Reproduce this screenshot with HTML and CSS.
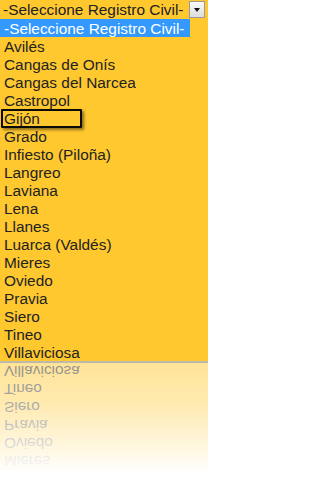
FILE: index.html
```html
<!DOCTYPE html>
<html lang="es">
<head>
<meta charset="utf-8">
<title>Registro Civil</title>
<link rel="stylesheet" href="styles.css">
</head>
<body>
<div class="picker">
  <div class="select">
    <span class="select-value">-Seleccione Registro Civil-</span>
    <span class="select-btn"><span class="arrow"></span></span>
  </div>
  <ul class="options">
    <li class="selected">-Seleccione Registro Civil-</li>
    <li>Avilés</li>
    <li>Cangas de Onís</li>
    <li>Cangas del Narcea</li>
    <li>Castropol</li>
    <li class="focused"><span class="ring"></span>Gijón</li>
    <li>Grado</li>
    <li>Infiesto (Piloña)</li>
    <li>Langreo</li>
    <li>Laviana</li>
    <li>Lena</li>
    <li>Llanes</li>
    <li>Luarca (Valdés)</li>
    <li>Mieres</li>
    <li>Oviedo</li>
    <li>Pravia</li>
    <li>Siero</li>
    <li>Tineo</li>
    <li>Villaviciosa</li>
  </ul>
  <div class="reflection" aria-hidden="true">
    <ul class="mirror">
      <li>Villaviciosa</li>
      <li>Tineo</li>
      <li>Siero</li>
      <li>Pravia</li>
      <li>Oviedo</li>
      <li>Mieres</li>
    </ul>
  </div>
</div>
</body>
</html>
```
FILE: styles.css
```css
html, body {
  margin: 0;
  padding: 0;
  background: #ffffff;
}
body {
  width: 208px;
  font-family: "Liberation Sans", Arial, sans-serif;
  font-size: 15.4px;
  color: #222222;
}
.picker {
  display: flex;
  flex-direction: column;
  width: 208px;
}
.select {
  display: flex;
  align-items: stretch;
  height: 19px;
  background: #ffc82f;
}
.select-value {
  flex: 1;
  padding-left: 3px;
  line-height: 20px;
  white-space: nowrap;
}
.select-btn {
  width: 16px;
  height: 17px;
  margin: 1px 3px 1px 0;
  box-sizing: border-box;
  border: 1px solid #9a9a9a;
  background: linear-gradient(#fafafa, #dcdcdc);
  display: flex;
  align-items: center;
  justify-content: center;
}
.arrow {
  width: 0;
  height: 0;
  border-left: 3.5px solid transparent;
  border-right: 3.5px solid transparent;
  border-top: 4px solid #111;
  margin-top: 1px;
}
.options, .mirror {
  list-style: none;
  margin: 0;
  padding: 0;
  background: #ffc82f;
}
.options li, .mirror li {
  height: 18px;
  line-height: 20px;
  padding-left: 4px;
  white-space: nowrap;
}
.options li.selected {
  width: 186px;
  background: #3399ff;
  color: #ffffff;
}
.options li.focused {
  position: relative;
}
.ring {
  position: absolute;
  left: 1px;
  top: 0;
  width: 81px;
  height: 19px;
  box-sizing: border-box;
  border: 2px solid #0a0a0a;
  border-radius: 1px;
  box-shadow: 2px 2px 3px rgba(0, 0, 0, 0.45);
}
.options {
  border-bottom: 2px solid #bdb9ad;
}
.reflection {
  position: relative;
  height: 122px;
  overflow: hidden;
}
.mirror li {
  transform: scaleY(-1);
  color: #1a1a1a;
}
.reflection::after {
  content: "";
  position: absolute;
  inset: 0;
  background: linear-gradient(
    to bottom,
    rgba(255, 255, 255, 0.5) 0px,
    rgba(255, 255, 255, 0.62) 40px,
    rgba(255, 255, 255, 0.8) 75px,
    rgba(255, 255, 255, 0.94) 100px,
    rgba(255, 255, 255, 1) 112px
  );
}
```
